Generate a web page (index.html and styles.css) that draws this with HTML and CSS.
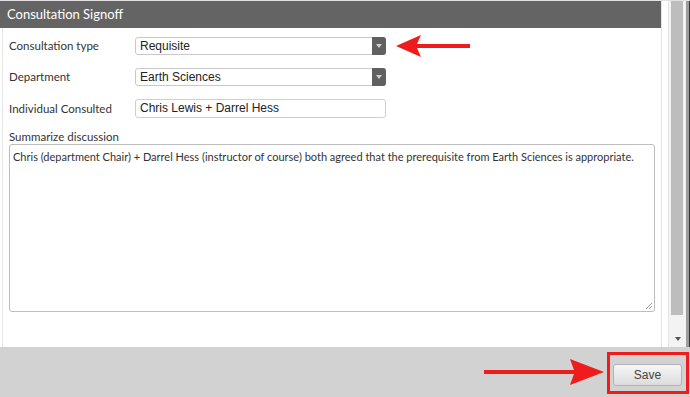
FILE: index.html
```html
<!DOCTYPE html>
<html lang="en">
<head>
  <meta charset="UTF-8">
  <title>Consultation Signoff</title>
  <link rel="stylesheet" href="styles.css">
</head>
<body>

<div class="main">
  <!-- signoff panel -->
  <div class="panel">
    <div class="panel-head">Consultation Signoff</div>
    <div class="panel-body">
      <div class="row">
        <label class="row-label">Consultation type</label>
        <div class="select">
          <span class="select-value">Requisite</span>
          <span class="select-btn"><span class="caret"></span></span>
        </div>
        <svg class="arrow-left" width="76" height="24" viewBox="0 0 76 24">
          <polygon points="0,12 25,1 21,10 74,10 74,14 21,14 25,23" fill="#ee1c1c"/>
        </svg>
      </div>
      <div class="row">
        <label class="row-label">Department</label>
        <div class="select">
          <span class="select-value">Earth Sciences</span>
          <span class="select-btn"><span class="caret"></span></span>
        </div>
      </div>
      <div class="row row-tall">
        <label class="row-label">Individual Consulted</label>
        <div class="text-input">Chris Lewis + Darrel Hess</div>
      </div>
      <div class="summary">
        <label class="summary-label">Summarize discussion</label>
        <div class="textarea">Chris (department Chair) + Darrel Hess (instructor of course) both agreed that the prerequisite from Earth Sciences is appropriate.<svg class="grip" width="9" height="9" viewBox="0 0 9 9">
            <path d="M8 2 L2 8 M8 5 L5 8" stroke="#999" stroke-width="1"/>
          </svg></div>
      </div>
    </div>
  </div>

  <!-- scrollbar -->
  <div class="scroll">
    <div class="scroll-thumb"></div>
    <div class="scroll-down"></div>
  </div>
  <div class="frame-edge"></div>
</div>

<div class="footer">
  <svg class="arrow-right" width="122" height="28" viewBox="0 0 122 28">
    <polygon points="0,12 90,12 86,1 120,14 86,27 90,16 0,16" fill="#ee1c1c"/>
  </svg>
  <div class="save-box">
    <button class="save-btn">Save</button>
  </div>
</div>

</body>
</html>
```

FILE: styles.css
```css
body {
  margin: 0;
  width: 690px;
  height: 397px;
  overflow: hidden;
  background: #fff;
  font-family: Lato, 'Open Sans', sans-serif;
  color: #333;
}

.main {
  display: flex;
  height: 347px;
  border-top: 1px solid #e2e2e2;
  box-sizing: border-box;
}

.panel {
  width: 663px;
  display: flex;
  flex-direction: column;
  border-right: 1px solid #e4e4e4;
  box-sizing: border-box;
}

.panel-head {
  height: 27px;
  background: #646464;
  color: #fff;
  font-size: 13px;
  line-height: 27px;
  padding-left: 7px;
}

.panel-body {
  flex: 1;
  margin-left: 2px;
  border-left: 1px solid #e6e6e6;
  padding: 9px 0 0 6px;
}

.row {
  display: flex;
  align-items: center;
  height: 18px;
  margin-bottom: 13px;
}

.row-tall {
  height: 19px;
  margin-bottom: 12px;
}

.row-label {
  width: 126px;
  font-size: 11.5px;
  line-height: 14px;
  color: #333;
}

.select {
  width: 251px;
  height: 18px;
  box-sizing: border-box;
  border: 1px solid #c9c9c9;
  border-radius: 3px;
  display: flex;
  font-family: 'Liberation Sans', Arial, sans-serif;
  font-size: 12px;
  color: #222;
}

.select-value {
  flex: 1;
  line-height: 16px;
  padding-left: 4px;
}

.select-btn {
  width: 14px;
  margin: -1px -1px -1px 0;
  background: #606060;
  border-radius: 0 3px 3px 0;
  display: flex;
  align-items: center;
  justify-content: center;
}

.caret {
  width: 0;
  height: 0;
  border-left: 3px solid transparent;
  border-right: 3px solid transparent;
  border-top: 4px solid #cfcfcf;
}

.arrow-left {
  margin-left: 10px;
}

.text-input {
  width: 251px;
  height: 19px;
  box-sizing: border-box;
  border: 1px solid #cfcfcf;
  border-radius: 3px;
  padding-left: 4px;
  line-height: 17px;
  font-family: 'Liberation Sans', Arial, sans-serif;
  font-size: 12px;
  color: #222;
}

.summary-label {
  display: block;
  font-size: 11.5px;
  line-height: 14px;
}

.textarea {
  position: relative;
  width: 646px;
  height: 168px;
  box-sizing: border-box;
  border: 1px solid #bdbdbd;
  border-radius: 3px;
  padding: 4px 3px;
  font-size: 11px;
  line-height: 15px;
  color: #333;
  white-space: nowrap;
}

.grip {
  position: absolute;
  right: 1px;
  bottom: 1px;
}

.scroll {
  width: 17px;
  margin-left: 6px;
  background: #f3f3f3;
  border-left: 1px solid #e6e6e6;
  position: relative;
}

.scroll-thumb {
  width: 12px;
  height: 314px;
  margin-left: 2px;
  background: #bdbdbd;
}

.scroll-down {
  position: absolute;
  left: 6px;
  top: 336px;
  width: 0;
  height: 0;
  border-left: 3px solid transparent;
  border-right: 3px solid transparent;
  border-top: 4px solid #555;
}

.frame-edge {
  width: 3px;
  background: #9d9d9d;
  border-right: 1px solid #333;
}

.footer {
  height: 50px;
  background: #d2d2d2;
  display: flex;
  align-items: center;
  justify-content: flex-end;
  padding-right: 1px;
}

.arrow-right {
  margin-right: 1px;
}

.save-box {
  width: 82px;
  height: 42px;
  box-sizing: border-box;
  border: 3px solid #ee1c1c;
  padding: 8px 4px 6px 3px;
  margin-top: 1px;
}

.save-btn {
  width: 69px;
  height: 22px;
  border: 1px solid #b3b3b3;
  border-radius: 3px;
  background: linear-gradient(#f6f6f6, #dcdcdc);
  font-family: 'Liberation Sans', Arial, sans-serif;
  font-size: 12px;
  color: #444;
  padding: 0;
}
```
